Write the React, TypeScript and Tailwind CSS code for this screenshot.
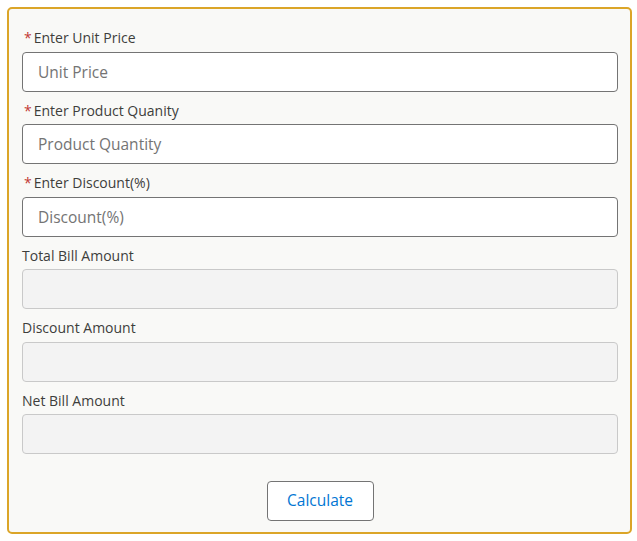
const fields = [
  { label: "Enter Unit Price", placeholder: "Unit Price", required: true },
  { label: "Enter Product Quanity", placeholder: "Product Quantity", required: true },
  { label: "Enter Discount(%)", placeholder: "Discount(%)", required: true },
  { label: "Total Bill Amount", placeholder: "", required: false },
  { label: "Discount Amount", placeholder: "", required: false },
  { label: "Net Bill Amount", placeholder: "", required: false },
];

export default function App() {
  return (
    <div className="min-h-[541px] bg-white pl-[7px] pt-[7px] font-['Open_Sans','Noto_Sans',sans-serif]">
      <div className="flex h-[527px] w-[625px] flex-col rounded-[5px] border-2 border-[#dba528] bg-[#f9f9f7] pl-[13px] pr-[12px] pt-[18.8px]">
        {fields.map((f) => (
          <div key={f.label} className="mb-[8.5px] flex flex-col">
            <label className="mb-[4px] flex h-[20px] items-center text-[14px] text-[#3e3e3c]">
              {f.required && <span className="ml-[2px] mr-[2px] text-[#c23934]">*</span>}
              {f.label}
            </label>
            {f.required ? (
              <input
                placeholder={f.placeholder}
                className="h-[40px] rounded-[4px] border border-[#747474] bg-white px-[15px] text-[15.5px] outline-none placeholder:text-[#747474]"
              />
            ) : (
              <input
                disabled
                className="h-[40px] rounded-[4px] border border-[#c9c9c9] bg-[#f3f3f3] px-[15px] text-[15.5px]"
              />
            )}
          </div>
        ))}
        <div className="mt-[18px] flex justify-center">
          <button className="h-[40px] w-[107px] rounded-[4px] border border-[#747474] bg-white text-[15.5px] text-[#0176d3]">
            Calculate
          </button>
        </div>
      </div>
    </div>
  );
}
